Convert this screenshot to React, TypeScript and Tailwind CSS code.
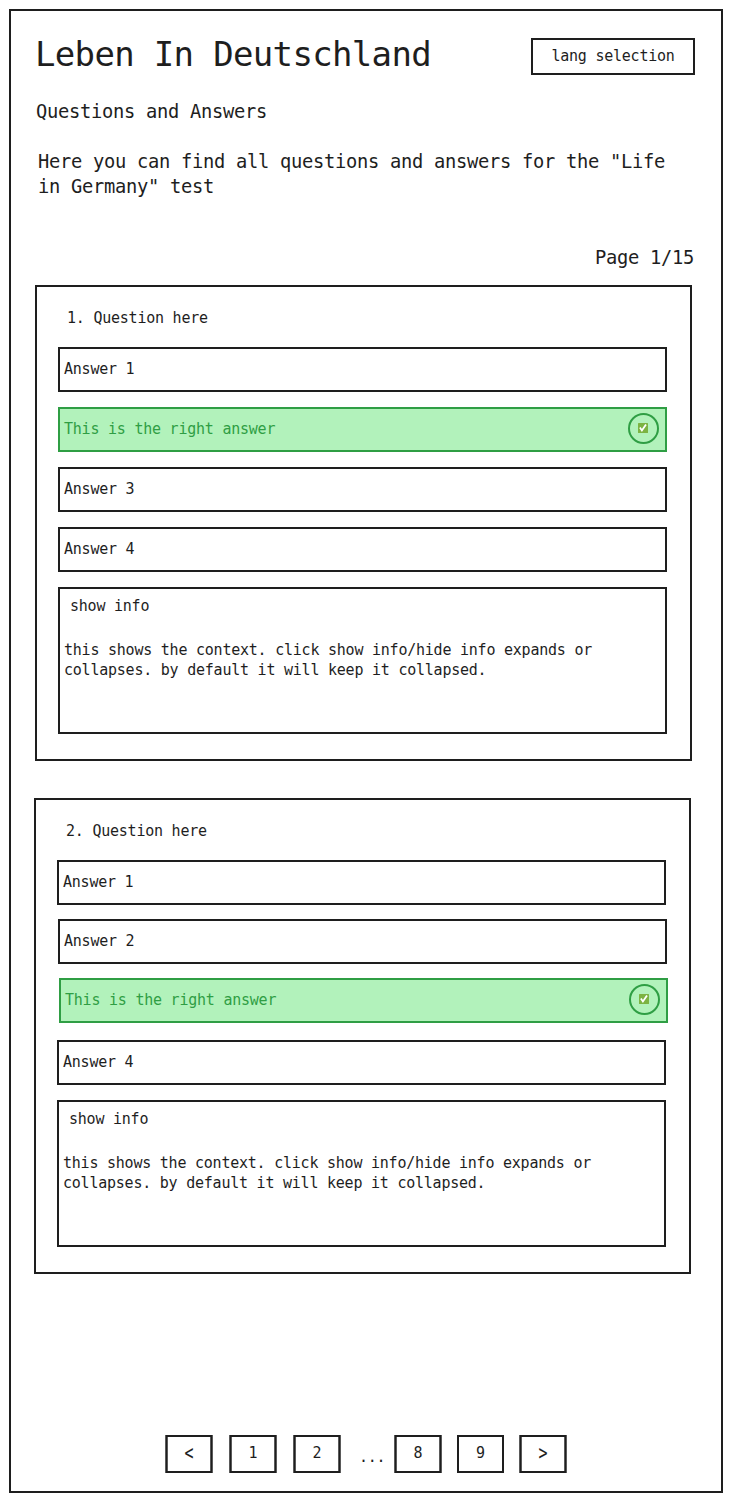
import React from "react";

type Answer = { text: string; correct?: boolean; className: string };
type Question = { title: string; className: string; answers: Answer[]; info: string };

const questions: Question[] = [
  {
    title: "1. Question here",
    className: "ml-[24px] mt-[15px]",
    answers: [
      { text: "Answer 1", className: "ml-[21px] mt-[19px]" },
      { text: "This is the right answer", correct: true, className: "ml-[21px] mt-[15px]" },
      { text: "Answer 3", className: "ml-[21px] mt-[15px]" },
      { text: "Answer 4", className: "ml-[21px] mt-[15px]" },
    ],
    info: "this shows the context. click show info/hide info expands or collapses. by default it will keep it collapsed.",
  },
  {
    title: "2. Question here",
    className: "ml-[23px] mt-[37px]",
    answers: [
      { text: "Answer 1", className: "ml-[21px] mt-[19px]" },
      { text: "Answer 2", className: "ml-[22px] mt-[14px]" },
      { text: "This is the right answer", correct: true, className: "ml-[23px] mt-[14px]" },
      { text: "Answer 4", className: "ml-[21px] mt-[17px]" },
    ],
    info: "this shows the context. click show info/hide info expands or collapses. by default it will keep it collapsed.",
  },
];

function CheckBadge() {
  return (
    <span className="mr-[6px] flex h-[31px] w-[31px] shrink-0 items-center justify-center rounded-full border-2 border-[#2f9e44] pr-px pb-px">
      <svg width="10" height="10" viewBox="0 0 10 10" aria-hidden="true">
        <rect width="10" height="10" rx="0.5" fill="#7cb342" />
        <path d="M1.9 4.6 L3.9 7.4 L8 1.6" fill="none" stroke="#fff" strokeWidth="1.8" />
      </svg>
    </span>
  );
}

function AnswerRow({ answer }: { answer: Answer }) {
  const tone = answer.correct
    ? "border-[#2f9e44] bg-[#b2f2bb] text-[#2f9e44]"
    : "border-[#1e1e1e]";
  return (
    <div
      className={`flex h-[45px] w-[609px] items-center justify-between border-2 pb-[2px] pl-[4px] ${tone} ${answer.className}`}
    >
      <span className="whitespace-nowrap">{answer.text}</span>
      {answer.correct && <CheckBadge />}
    </div>
  );
}

function QuestionCard({ question }: { question: Question }) {
  return (
    <section
      className={`flex h-[476px] w-[657px] flex-col border-2 border-[#1e1e1e] ${question.className}`}
    >
      <h2 className="mt-[21px] ml-[30px]">{question.title}</h2>
      {question.answers.map((a) => (
        <AnswerRow key={a.text} answer={a} />
      ))}
      <div className="mt-[15px] ml-[21px] h-[147px] w-[609px] border-2 border-[#1e1e1e] pt-[7px] pl-[4px]">
        <button className="ml-[6px] block">show info</button>
        <p className="mt-[24px] w-[560px]">{question.info}</p>
      </div>
    </section>
  );
}

const softSides =
  "w-[46px] border-x shadow-[-1px_0_0_#5a5a5a,1px_0_0_#5a5a5a,inset_1px_0_0_#5a5a5a,inset_-1px_0_0_#5a5a5a]";

function PageButton({ label, className }: { label: string; className: string }) {
  const arrow = label === "<" || label === ">";
  return (
    <button
      className={`flex h-[38px] items-center justify-center border-y-2 border-[#1e1e1e] pb-[2px] ${className}`}
    >
      <span className={arrow ? "scale-y-[1.4]" : ""}>{label}</span>
    </button>
  );
}

export default function App() {
  return (
    <div className="h-[1502px] w-[732px] bg-white p-[9px] font-['DejaVu_Sans_Mono',monospace] text-[15px] leading-[20px] tracking-[-0.0154em] text-[#1e1e1e]">
      <main className="flex h-[1484px] w-[714px] flex-col border-2 border-[#1e1e1e]">
        <header className="mt-[20px] flex items-start justify-between pr-[26px] pl-[24px]">
          <h1 className="mt-px text-[34px] leading-[45px] tracking-[-0.67px]">
            Leben In Deutschland
          </h1>
          <button className="mt-[7px] flex h-[37px] w-[164px] items-center justify-center border-2 border-[#1e1e1e] pb-[2px]">
            lang selection
          </button>
        </header>
        <div className="text-[18.75px] leading-[25px] tracking-[-0.0154em]">
          <p className="mt-[22px] ml-[25px]">Questions and Answers</p>
          <p className="mt-[25px] ml-[27px] w-[650px]">
            Here you can find all questions and answers for the "Life in Germany" test
          </p>
          <p className="mt-[46px] mr-[27px] text-right">Page 1/15</p>
        </div>
        {questions.map((q) => (
          <QuestionCard key={q.title} question={q} />
        ))}
        <nav className="mt-[161px] ml-[155px] flex">
          <PageButton label="<" className={softSides} />
          <PageButton label="1" className={`ml-[18px] ${softSides}`} />
          <PageButton label="2" className={`ml-[18px] ${softSides}`} />
          <span className="mt-[12px] ml-[19px] w-[27px]">...</span>
          <PageButton label="8" className={`ml-[9px] ${softSides}`} />
          <PageButton label="9" className="ml-[16px] w-[47px] border-x-2" />
          <PageButton label=">" className={`ml-[16px] ${softSides}`} />
        </nav>
      </main>
    </div>
  );
}
